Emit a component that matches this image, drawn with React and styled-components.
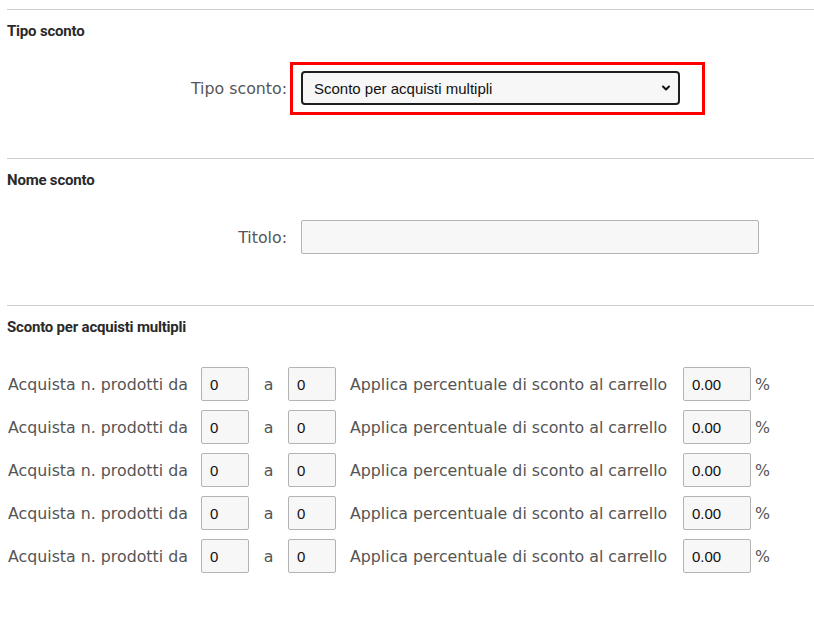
import styled, { createGlobalStyle } from "styled-components";
import { ChevronDown } from "lucide-react";

const GlobalStyle = createGlobalStyle`
  html, body {
    margin: 0;
    padding: 0;
    background: #fff;
  }
  body {
    font-family: "DejaVu Sans", sans-serif;
  }
`;

const Page = styled.div`
  width: 814px;
  padding-top: 9px;
`;

const Section = styled.section`
  border-top: 1px solid #cfcfcf;
  margin-left: 7px;
  padding: 11px 0 ${(p) => p.$bottom || 53}px 0;
`;

const SectionTitle = styled.h3`
  margin: 0;
  font-family: "Liberation Sans Narrow", "Roboto", sans-serif;
  font-weight: 700;
  font-size: 15px;
  line-height: 20px;
  letter-spacing: -0.2px;
  color: #2a2a2a;
`;

const FieldRow = styled.div`
  display: grid;
  grid-template-columns: 280px auto;
  column-gap: 14px;
  align-items: center;
  margin-top: 30px;
`;

const Label = styled.label`
  text-align: right;
  font-family: "DejaVu Sans", sans-serif;
  font-size: 15.8px;
  color: #555;
`;

const Highlight = styled.div`
  position: relative;
  width: 379px;

  &::after {
    content: "";
    position: absolute;
    left: -11px;
    top: -9px;
    right: -25px;
    bottom: -10px;
    border: 3px solid #ff0000;
    pointer-events: none;
  }
`;

const Select = styled.select`
  display: block;
  appearance: none;
  width: 379px;
  height: 34px;
  box-sizing: border-box;
  border: 2px solid #1f1f1f;
  border-radius: 4px;
  background: #f7f7f7;
  padding: 0 0 0 11px;
  font-family: "Liberation Sans", Arial, sans-serif;
  font-size: 15px;
  color: #111;
  outline: none;
`;

const Caret = styled(ChevronDown)`
  position: absolute;
  right: 8px;
  top: 11px;
  pointer-events: none;
`;

const TextInput = styled.input`
  display: block;
  box-sizing: border-box;
  width: ${(p) => p.$w}px;
  height: 34px;
  border: 1px solid #b3b3b3;
  border-radius: 2px;
  background: #f7f7f7;
  padding: 0 0 0 8px;
  font-family: "Liberation Sans", Arial, sans-serif;
  font-size: 15px;
  color: #111;
  outline: none;
`;

const Rules = styled.div`
  display: flex;
  flex-direction: column;
  gap: 9px;
  margin-top: 30px;
`;

const RuleRow = styled.div`
  display: grid;
  grid-template-columns: 194px 48px 39px 48px 347px 68px auto;
  align-items: center;
`;

const RowText = styled.span`
  font-family: "DejaVu Sans", sans-serif;
  font-size: 15.8px;
  color: #555;
  padding-left: ${(p) => p.$pl || 0}px;
  text-align: ${(p) => p.$align || "left"};
  white-space: nowrap;
`;

const rules = [0, 1, 2, 3, 4];

export default function App() {
  return (
    <Page>
      <GlobalStyle />
      <Section>
        <SectionTitle>Tipo sconto</SectionTitle>
        <FieldRow>
          <Label>Tipo sconto:</Label>
          <Highlight>
            <Select defaultValue="multi">
              <option value="multi">Sconto per acquisti multipli</option>
            </Select>
            <Caret size={12} strokeWidth={4} color="#111" />
          </Highlight>
        </FieldRow>
      </Section>

      <Section $bottom={51}>
        <SectionTitle>Nome sconto</SectionTitle>
        <FieldRow>
          <Label>Titolo:</Label>
          <TextInput $w={458} defaultValue="" />
        </FieldRow>
      </Section>

      <Section>
        <SectionTitle>Sconto per acquisti multipli</SectionTitle>
        <Rules>
          {rules.map((i) => (
            <RuleRow key={i}>
              <RowText $pl={1}>Acquista n. prodotti da</RowText>
              <TextInput $w={48} defaultValue="0" />
              <RowText $align="center">a</RowText>
              <TextInput $w={48} defaultValue="0" />
              <RowText $pl={14}>Applica percentuale di sconto al carrello</RowText>
              <TextInput $w={68} defaultValue="0.00" />
              <RowText $pl={4}>%</RowText>
            </RuleRow>
          ))}
        </Rules>
      </Section>
    </Page>
  );
}
